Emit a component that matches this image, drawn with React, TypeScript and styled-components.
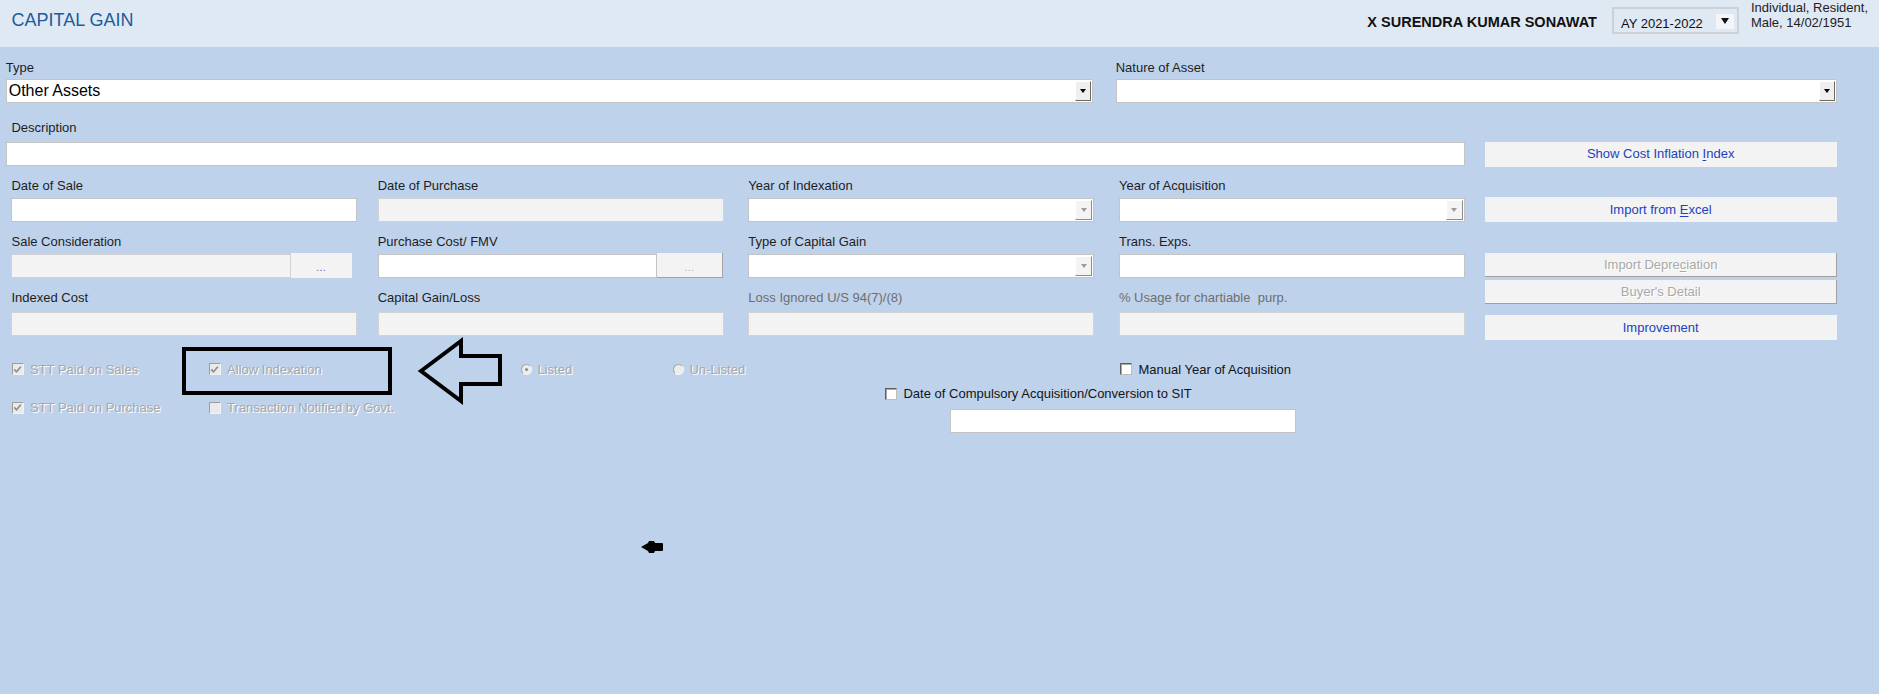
import React from 'react';
import styled, { createGlobalStyle } from 'styled-components';

const GlobalStyle = createGlobalStyle`
  html, body {
    margin: 0;
    padding: 0;
  }
  body {
    background: #bed2ec;
    font-family: "Liberation Sans", Arial, sans-serif;
    color: #1a1a1a;
  }
  * {
    box-sizing: border-box;
  }
`;

const Page = styled.div`
  position: relative;
  width: 1879px;
  height: 694px;
  overflow: hidden;
  background: #bed2ec;
`;

/* ---------- header ---------- */

const Header = styled.header`
  display: flex;
  align-items: flex-start;
  height: 47px;
  padding: 0 11px 0 11.5px;
  background: #dfe9f4;
`;

const Title = styled.h1`
  margin: 10px 0 0;
  font-size: 18px;
  line-height: 21px;
  font-weight: normal;
  color: #1d5c9c;
`;

const UserName = styled.div`
  margin: 14px 0 0 auto;
  font-size: 14.5px;
  line-height: 17px;
  font-weight: bold;
  color: #111;
  white-space: nowrap;
`;

const YearSelect = styled.div`
  display: flex;
  align-items: flex-start;
  width: 127px;
  height: 27px;
  margin: 7px 0 0 15px;
  padding: 6.5px 0 0 7px;
  border: 2px solid #cdd1d6;
  font-size: 13px;
  line-height: 15px;
  color: #111;
  white-space: nowrap;
`;

const YearArrow = styled.span`
  display: flex;
  align-items: center;
  justify-content: center;
  width: 18px;
  height: 15px;
  margin: -2px 3px 0 auto;
  background: #f3f5f8;

  &::after {
    content: '';
    border-left: 4.5px solid transparent;
    border-right: 4.5px solid transparent;
    border-top: 6px solid #111;
  }
`;

const Profile = styled.div`
  margin-left: 12px;
  font-size: 13px;
  line-height: 15px;
  color: #222;
  white-space: nowrap;
`;

/* ---------- form parts ---------- */

const TypeRow = styled.div`
  display: flex;
  gap: 22.5px;
  padding: 13.5px 0 0 5.7px;
`;

const Field = styled.div<{ $width?: number }>`
  display: flex;
  flex-direction: column;
  width: ${(p) => (p.$width ? `${p.$width}px` : '100%')};
`;

const Label = styled.label<{ $muted?: boolean; $gap?: number; $indent?: number }>`
  display: block;
  height: 15px;
  margin-bottom: ${(p) => p.$gap ?? 4}px;
  padding-left: ${(p) => p.$indent ?? 0}px;
  font-size: 13px;
  line-height: 13px;
  color: ${(p) => (p.$muted ? '#6e6e6e' : '#1e1e1e')};
  white-space: nowrap;
`;

const TextBox = styled.div<{ $disabled?: boolean; $width?: number }>`
  flex: none;
  height: 24px;
  width: ${(p) => (p.$width ? `${p.$width}px` : '100%')};
  background: ${(p) => (p.$disabled ? '#f3f3f3' : '#ffffff')};
  border: 1px solid ${(p) => (p.$disabled ? '#d2d2d2' : '#c4c4c4')};
`;

const SelectBox = styled.div`
  display: flex;
  align-items: center;
  height: 24px;
  width: 100%;
  background: #ffffff;
  border: 1px solid #c4c4c4;
`;

const SelectValue = styled.span`
  flex: 1;
  padding-left: 2px;
  font-size: 16px;
  color: #000;
`;

const DropButton = styled.span<{ $disabled?: boolean }>`
  display: flex;
  align-items: center;
  justify-content: center;
  width: ${(p) => (p.$disabled ? 17 : 16)}px;
  height: 20px;
  margin: 0 1px 0 auto;
  background: ${(p) => (p.$disabled ? '#f4f4f4' : '#efefef')};
  border: 1px solid;
  border-color: #ffffff ${(p) => (p.$disabled ? '#8c8c8c' : '#6a6a6a')}
    ${(p) => (p.$disabled ? '#8c8c8c' : '#6a6a6a')} #ffffff;

  &::after {
    content: '';
    border-left: 3.5px solid transparent;
    border-right: 3.5px solid transparent;
    border-top: 4px solid ${(p) => (p.$disabled ? '#9c9c9c' : '#000')};
  }
`;

const InputPair = styled.div`
  display: flex;
`;

const DotsButton = styled.span<{ $disabled?: boolean; $width: number }>`
  display: flex;
  align-items: center;
  justify-content: center;
  width: ${(p) => p.$width}px;
  height: 25px;
  margin-top: -0.5px;
  padding-top: 4px;
  background: #f3f3f3;
  border-right: 1px solid ${(p) => (p.$disabled ? '#a3a3a3' : 'transparent')};
  border-bottom: 1px solid ${(p) => (p.$disabled ? '#a3a3a3' : 'transparent')};
  font-size: 10px;
  letter-spacing: 0.5px;
  color: ${(p) => (p.$disabled ? '#b4b4b4' : '#3a5bd0')};
`;

const Middle = styled.div`
  display: flex;
  margin-top: 17.5px;
  padding-left: 5.7px;
`;

const LeftArea = styled.div`
  width: 1459.5px;
`;

const FieldGrid = styled.div`
  display: grid;
  grid-template-columns: 366.2px 370.7px 370.6px 346px;
  row-gap: 13px;
  margin-top: 12.5px;
  padding-left: 5.8px;
`;

const ButtonColumn = styled.div`
  display: flex;
  flex-direction: column;
  width: 352px;
  margin-left: 20px;
  padding-top: 21px;
`;

const ActionButton = styled.div<{ $disabled?: boolean; $top?: number }>`
  display: flex;
  align-items: center;
  justify-content: center;
  height: ${(p) => (p.$disabled ? 24 : 25)}px;
  margin-top: ${(p) => p.$top ?? 0}px;
  background: #f3f3f3;
  border-right: 1px solid ${(p) => (p.$disabled ? '#a0a0a0' : 'transparent')};
  border-bottom: 1px solid ${(p) => (p.$disabled ? '#a0a0a0' : 'transparent')};
  font-size: 13px;
  color: ${(p) => (p.$disabled ? '#a9a9a9' : '#2142bf')};
  text-shadow: ${(p) => (p.$disabled ? '1px 1px 0 #ffffff' : 'none')};
  cursor: default;

  u {
    text-underline-offset: 2px;
  }
`;

/* ---------- checks & radios ---------- */

const OptionGrid = styled.div`
  display: grid;
  grid-template-columns: 197.1px 312.4px 152px 212px 65px 170px auto;
  grid-template-rows: 16px 23.5px auto;
  margin-top: 21px;
  padding-left: 11.5px;
`;

const Cell = styled.div<{ $col: string; $row: string }>`
  grid-column: ${(p) => p.$col};
  grid-row: ${(p) => p.$row};
  display: flex;
`;

const CompulsoryGroup = styled.div`
  grid-column: 5 / span 3;
  grid-row: 2 / span 2;
  display: flex;
  flex-direction: column;
  align-items: flex-start;
  padding-top: 8.5px;
`;

const Option = styled.div<{ $disabled?: boolean; $gap?: number; $height?: number }>`
  display: flex;
  align-items: center;
  gap: ${(p) => p.$gap ?? 6.5}px;
  height: ${(p) => p.$height ?? 16}px;
  font-size: 13px;
  line-height: 15px;
  white-space: nowrap;
  color: ${(p) => (p.$disabled ? '#a8a8a8' : '#141414')};
  text-shadow: ${(p) => (p.$disabled ? '1px 1px 0 #ffffff' : 'none')};
`;

const Box = styled.span<{ $disabled?: boolean }>`
  display: flex;
  align-items: center;
  justify-content: center;
  flex: none;
  width: 12px;
  height: 12px;
  background: ${(p) => (p.$disabled ? '#eaeaea' : '#ffffff')};
  border: 1px solid;
  border-color: ${(p) =>
    p.$disabled ? '#9d9d9d #f2f2f2 #f2f2f2 #9d9d9d' : '#5e5e5e #bdbdbd #bdbdbd #5e5e5e'};
  box-shadow: ${(p) => (p.$disabled ? 'none' : 'inset 1px 1px 0 #a8a8a8')};
`;

const Round = styled.span`
  display: flex;
  align-items: center;
  justify-content: center;
  flex: none;
  width: 11px;
  height: 11px;
  border-radius: 50%;
  background: #ededed;
  border: 1px solid #a5a5a5;
  border-right-color: #f4f4f4;
  border-bottom-color: #f4f4f4;
`;

const RoundDot = styled.span`
  width: 3px;
  height: 3px;
  border-radius: 50%;
  background: #8a8a8a;
`;

const CompulsoryInput = styled(TextBox)`
  margin: 7.5px 0 0 65px;
`;

/* ---------- overlays (annotation drawn on screenshot) ---------- */

const MarkBox = styled.div`
  position: absolute;
  left: 182px;
  top: 347px;
  width: 210px;
  height: 47.5px;
  border: 4px solid #000;
  pointer-events: none;
`;

const Overlay = styled.svg<{ $left: number; $top: number }>`
  position: absolute;
  left: ${(p) => p.$left}px;
  top: ${(p) => p.$top}px;
  pointer-events: none;
`;

const Tick = ({ disabled }: { disabled?: boolean }) => (
  <svg width="9" height="9" viewBox="0 0 9 9">
    <polyline
      points="1.2,4.4 3.5,6.8 7.8,1.8"
      fill="none"
      stroke={disabled ? '#8e8e8e' : '#222'}
      strokeWidth="1.7"
    />
  </svg>
);

const Check = ({
  label,
  checked,
  disabled,
  height,
}: {
  label: string;
  checked?: boolean;
  disabled?: boolean;
  height?: number;
}) => (
  <Option $disabled={disabled} $height={height}>
    <Box $disabled={disabled}>{checked && <Tick disabled={disabled} />}</Box>
    <span>{label}</span>
  </Option>
);

const Radio = ({ label, selected }: { label: string; selected?: boolean }) => (
  <Option $disabled $gap={5.5}>
    <Round>{selected && <RoundDot />}</Round>
    <span>{label}</span>
  </Option>
);

const Select = ({ value, disabled }: { value?: string; disabled?: boolean }) => (
  <SelectBox>
    <SelectValue>{value}</SelectValue>
    <DropButton $disabled={disabled} />
  </SelectBox>
);

export default function App() {
  return (
    <Page>
      <GlobalStyle />
      <Header>
        <Title>CAPITAL GAIN</Title>
        <UserName>X SURENDRA KUMAR SONAWAT</UserName>
        <YearSelect>
          AY 2021-2022
          <YearArrow />
        </YearSelect>
        <Profile>
          Individual, Resident,
          <br />
          Male, 14/02/1951
        </Profile>
      </Header>

      <TypeRow>
        <Field $width={1087.5}>
          <Label $gap={3.5}>Type</Label>
          <Select value="Other Assets" />
        </Field>
        <Field $width={721}>
          <Label $gap={3.5}>Nature of Asset</Label>
          <Select />
        </Field>
      </TypeRow>

      <Middle>
        <LeftArea>
          <Label $gap={6.5} $indent={5.8}>
            Description
          </Label>
          <TextBox />

          <FieldGrid>
            <Field $width={346}>
              <Label>Date of Sale</Label>
              <TextBox />
            </Field>
            <Field $width={346}>
              <Label>Date of Purchase</Label>
              <TextBox $disabled />
            </Field>
            <Field $width={346}>
              <Label>Year of Indexation</Label>
              <Select disabled />
            </Field>
            <Field $width={346}>
              <Label>Year of Acquisition</Label>
              <Select disabled />
            </Field>

            <Field $width={346}>
              <Label>Sale Consideration</Label>
              <InputPair>
                <TextBox $disabled $width={280} />
                <DotsButton $width={60.5}>...</DotsButton>
              </InputPair>
            </Field>
            <Field $width={346}>
              <Label>Purchase Cost/ FMV</Label>
              <InputPair>
                <TextBox $width={279.5} />
                <DotsButton $disabled $width={65.5}>
                  ...
                </DotsButton>
              </InputPair>
            </Field>
            <Field $width={346}>
              <Label>Type of Capital Gain</Label>
              <Select disabled />
            </Field>
            <Field $width={346}>
              <Label>Trans. Exps.</Label>
              <TextBox />
            </Field>

            <Field $width={346}>
              <Label $gap={6}>Indexed Cost</Label>
              <TextBox $disabled />
            </Field>
            <Field $width={346}>
              <Label $gap={6}>Capital Gain/Loss</Label>
              <TextBox $disabled />
            </Field>
            <Field $width={346}>
              <Label $gap={6} $muted>
                Loss Ignored U/S 94(7)/(8)
              </Label>
              <TextBox $disabled />
            </Field>
            <Field $width={346}>
              <Label $gap={6} $muted>
                % Usage for chartiable&nbsp; purp.
              </Label>
              <TextBox $disabled />
            </Field>
          </FieldGrid>
        </LeftArea>

        <ButtonColumn>
          <ActionButton>
            <span>
              Show Cost Inflation <u>I</u>ndex
            </span>
          </ActionButton>
          <ActionButton $top={30.5}>
            <span>
              Import from <u>E</u>xcel
            </span>
          </ActionButton>
          <ActionButton $disabled $top={31}>
            <span>
              Import Depre<u>c</u>iation
            </span>
          </ActionButton>
          <ActionButton $disabled $top={3}>
            Buyer's Detail
          </ActionButton>
          <ActionButton $top={11}>Improvement</ActionButton>
        </ButtonColumn>
      </Middle>

      <OptionGrid>
        <Cell $col="1" $row="1">
          <Check label="STT Paid on Sales" checked disabled />
        </Cell>
        <Cell $col="2" $row="1">
          <Check label="Allow Indexation" checked disabled />
        </Cell>
        <Cell $col="3" $row="1">
          <Radio label="Listed" selected />
        </Cell>
        <Cell $col="4" $row="1">
          <Radio label="Un-Listed" />
        </Cell>
        <Cell $col="7" $row="1">
          <Check label="Manual Year of Acquisition" />
        </Cell>
        <CompulsoryGroup>
          <Check label="Date of Compulsory Acquisition/Conversion to SIT" />
          <CompulsoryInput $width={346} />
        </CompulsoryGroup>
        <Cell $col="1" $row="3">
          <Check label="STT Paid on Purchase" checked disabled height={14} />
        </Cell>
        <Cell $col="2" $row="3">
          <Check label="Transaction Notified by Govt." disabled height={14} />
        </Cell>
      </OptionGrid>

      <MarkBox />
      <Overlay $left={414} $top={334} width="94" height="75" viewBox="0 0 94 75">
        <polygon
          points="7,37 47,7 47,22 86,22 86,50 47,50 47,67"
          fill="none"
          stroke="#000"
          strokeWidth="4"
          strokeLinejoin="miter"
        />
      </Overlay>
      <Overlay $left={640} $top={540} width="24" height="14" viewBox="0 0 24 14">
        <path
          d="M1 7 L8 3 L9 1 L14 1 L15 3 L22 3 Q23 3 23 4 L23 10 Q23 11 22 11 L15 11 L14 13 L9 13 L8 11 Z"
          fill="#000"
        />
      </Overlay>
    </Page>
  );
}
